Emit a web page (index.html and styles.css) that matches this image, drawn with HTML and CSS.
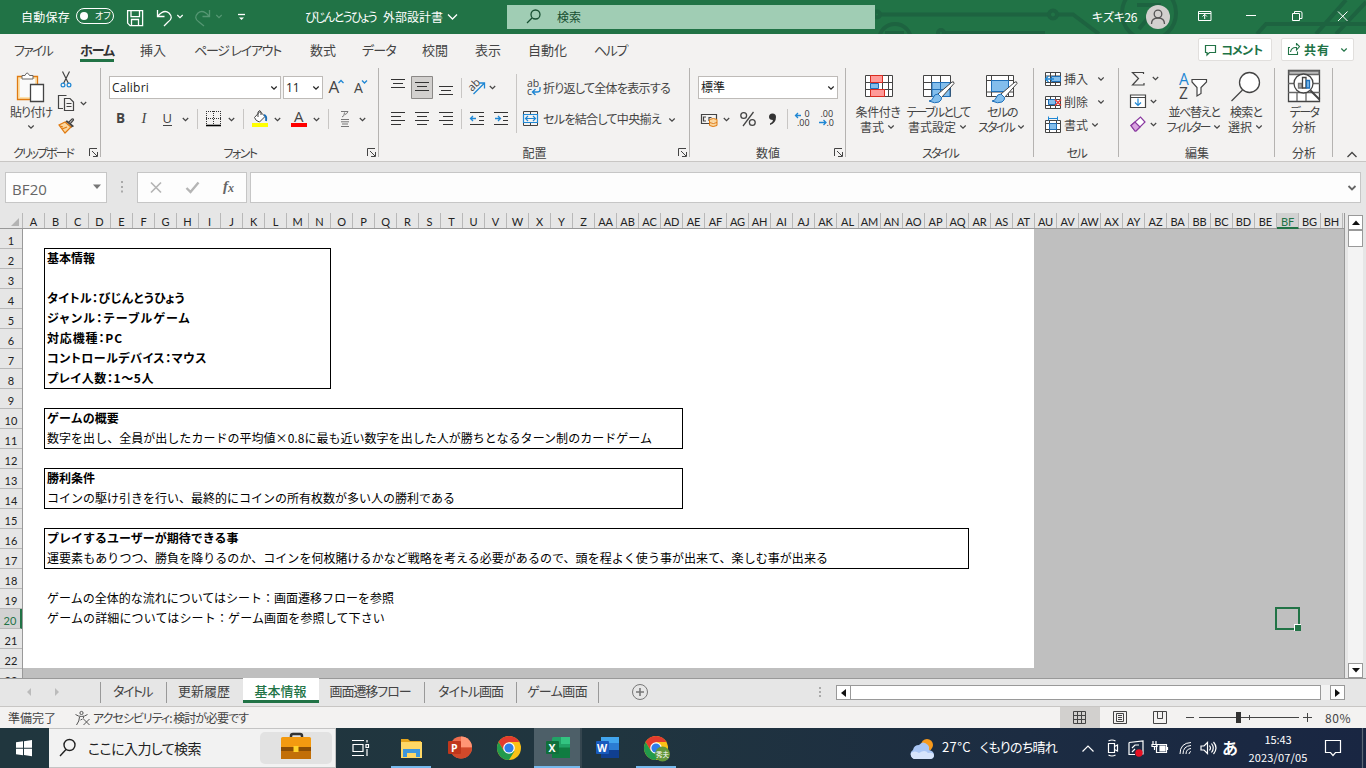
FILE: index.html
```html
<!DOCTYPE html>
<html lang="ja">
<head>
<meta charset="utf-8">
<title>びじんとうひょう 外部設計書</title>
<link rel="stylesheet" href="styles.css">
</head>
<body>
<svg class="defs" width="0" height="0">
  <defs>
    <path id="chev" d="M-2.700 -1.500L0 1.200L2.700 -1.500" fill="none" stroke="currentColor" stroke-width="1.200"/>
    <path id="launch" d="M.5 8V.5H8M3 3l5 5M8.500 4v4.500H4" fill="none" stroke="#444" stroke-width="1"/>
    <g id="brush">
      <path d="M31 7L17 19l3.500 3.500L33 8.500q0-2.500-2-1.500z" fill="#fff" stroke="#444"/>
      <path d="M17 19q-4 0-5 4-1 3-4 3 6 3 10 1 3-2 2.500-4.500z" fill="#83beec" stroke="#1e6fb8"/>
    </g>
    <g id="chrome">
      <circle r="12" fill="#fbc116"/>
      <path d="M-10.400 -6A12 12 0 0 1 10.400 -6L0 -6L-5 3z" fill="#e33b2e"/>
      <path d="M-10.400 -6A12 12 0 0 0 0 12L5.500 3L-5 3z" fill="#229a4b"/>
      <circle r="5.800" fill="#fff"/><circle r="4.600" fill="#2f7de9"/>
    </g>
  </defs>
</svg>

<header class="titlebar">
  <svg class="circuit" width="506" height="34" viewBox="860 0 506 34" fill="none" stroke="#1d6340" stroke-width="4">
    <path d="M879 14.500h169M1058 14.500h15l26 19.500M945 33h100"/>
    <circle cx="877" cy="14.500" r="3"/><circle cx="1053" cy="14.500" r="4"/><circle cx="941" cy="33" r="3"/>
    <circle cx="895" cy="40" r="16"/><path d="M885 33h19"/>
    <circle cx="1149" cy="13" r="27"/><path d="M1137 5h24M1139 29l18-22"/>
    <path d="M1257 34l9-10h100M1316 34l30-34M1336 34l30-32"/>
  </svg>
  <span class="autosave" data-fit="49">自動保存</span>
  <span class="toggle"><i></i><b>オフ</b></span>
  <svg width="130" height="34" viewBox="122 0 130 34" fill="none" stroke="#fff" stroke-width="1.300">
    <path d="M127.600 10.600h15v15h-12.500l-2.500-2.500zM131 10.600v6h8.500v-6M131.500 25.500v-6h7v6"/>
    <path d="M157.500 10v6.500h7M158 16q6-7 11-3 5 5-1 9l-4 4"/>
    <use href="#chev" x="180" y="16.500" color="#fff"/>
    <g stroke="#559773"><path d="M209.500 10v6.500h-7M209 16q-6-7-11-3-5 5 1 9l5 4"/></g>
    <use href="#chev" x="219" y="16.500" color="#559773"/>
    <path d="M238 14.500h7"/><path d="M239 17.500h5l-2.500 2.500z" fill="#fff" stroke="none"/>
  </svg>
  <span class="doc"><span data-fit="71">びじんとうひょう</span><span data-fit="60">外部設計書</span></span>
  <svg width="12" height="34" viewBox="447 0 12 34"><path d="M448 14.500l4.500 4.500 4.500-4.500" fill="none" stroke="#fff" stroke-width="1.300"/></svg>
  <div class="search">
    <svg width="20" height="24" viewBox="524 5 20 24" fill="none" stroke="#174f31" stroke-width="1.300"><circle cx="535.500" cy="14.500" r="4.500"/><path d="M532 18l-5 5"/></svg>
    <span>検索</span>
  </div>
  <span class="user" data-fit="45">キズキ26</span>
  <svg width="226" height="34" viewBox="1140 0 226 34" fill="none" stroke="#fff" stroke-width="1">
    <circle cx="1158" cy="17" r="12" fill="#d2d0ce" stroke="none"/>
    <g stroke="#555" stroke-width="1.300"><circle cx="1158" cy="14" r="3.800"/><path d="M1151.500 24q0-6 6.500-6t6.500 6"/></g>
    <path d="M1198.500 11.500h12.500v9h-12.500zM1198.500 13.500h12.500M1204.700 19v-4.500M1202.500 16.500l2.200-2.200 2.200 2.200"/>
    <path d="M1246 15.500h10M1292.500 13.500h7v7h-7zM1294.500 13.500v-2h6q1.500 0 1.500 1.500v5.500h-2.500M1338 11.500l9.500 9.500M1347.500 11.500l-9.500 9.500"/>
  </svg>
</header>

<nav class="tabs">
  <div class="tab-list">
    <span data-fit="38">ファイル</span><span class="active" data-fit="34">ホーム</span><span>挿入</span><span data-fit="87">ページ レイアウト</span><span>数式</span><span data-fit="34">データ</span><span>校閲</span><span>表示</span><span>自動化</span><span data-fit="33">ヘルプ</span>
  </div>
  <div class="tab-actions">
    <button class="btn comment"><svg width="14" height="14" fill="none" stroke="#217346" stroke-width="1.200"><path d="M1.500 2.500h10v7h-6l-2.500 2.500v-2.500h-1.500z"/></svg><span data-fit="41">コメント</span></button>
    <button class="btn share"><svg width="14" height="14" fill="none" stroke="#217346" stroke-width="1.100"><path d="M3 4.500h-1.500v7h9v-3M3.500 9q1-5 6-4.500v2.500l3-3.500-3-3v2"/></svg><span data-fit="26">共有</span><svg width="14" height="14" viewBox="-7 -7 14 14" color="#217346"><use href="#chev"/></svg></button>
  </div>
</nav>

<section class="ribbon">
  <div class="group g-clip">
    <div class="body">
      <div class="big w-paste">
        <svg width="32" height="38" viewBox="18 66 32 38" fill="none">
          <path d="M20.500 76.500h20v23h-20z" fill="#fde3b0" stroke="#e07a10" stroke-width="1.300"/><path d="M23 79h15v18h-15z" fill="#fafafa"/>
          <path d="M25 78.500v-3h3q2-5 4.500 0h3.500v3.500h-11z" fill="#fff" stroke="#666"/>
          <path d="M33.500 84.500h13v17h-13z" fill="#fff" stroke="#444" stroke-width="1.300"/>
        </svg>
        <span data-fit="42">貼り付け</span>
        <svg width="12" height="8" viewBox="-6 -4 12 8"><use href="#chev"/></svg>
      </div>
      <svg width="32" height="72" viewBox="57 66 32 72" fill="none" stroke="#444" stroke-width="1.200">
        <path d="M62.500 71.500l6 12M69.500 71.500l-6 12"/><g stroke="#1f87d4"><circle cx="63" cy="85" r="1.900"/><circle cx="69" cy="85" r="1.900"/></g>
        <path d="M63 108.500h-4.500v-13h8M64.500 98.500h5.500l3.500 3.500v8.500h-9zM66.500 103.500h5M66.500 106.500h5"/>
        <use href="#chev" x="83.500" y="103.500"/>
        <path d="M66 121l6 5M68 123l4-4q1.500-.5 1.500 1l-3.500 4M73 126l-6-5-2 2 6 4z"/><path d="M65 122l-6 3 6 8 6-6z" fill="#fbd7a0" stroke="#e07a10"/><path d="M60 126l3 1M62 129l5-2" stroke="#e07a10"/>
      </svg>
    </div>
    <div class="label"><span class="cap" data-fit="60">クリップボード</span><svg width="10" height="10"><use href="#launch"/></svg></div>
  </div>

  <div class="group g-font">
    <div class="stack">
      <div class="row r1">
        <div class="combo c-name"><span data-fit="37">Calibri</span><svg width="10" height="10" viewBox="-5 -5 10 10"><use href="#chev"/></svg></div>
        <div class="combo c-size"><span>11</span><svg width="10" height="10" viewBox="-5 -5 10 10"><use href="#chev"/></svg></div>
        <svg class="latin" width="50" height="26" viewBox="323 74 50 26"><text x="328.500" y="92" font-size="17" fill="#444">A</text><text x="354" y="92" font-size="14" fill="#444">A</text><path d="M338.500 82l2.500-2.500 2.500 2.500M362 79.500l2.500 2.500 2.500-2.500" fill="none" stroke="#1f87d4" stroke-width="1.300"/></svg>
      </div>
      <div class="row r2">
        <svg class="latin" width="88" height="24" viewBox="109 107 88 24" fill="#444"><text x="116" y="123" font-size="13.500" font-weight="700">B</text><text class="serif" x="141.500" y="123" font-size="14.500">I</text><text x="162.500" y="122.500" font-size="13">U</text><path d="M163 125.500h9" stroke="#444"/><use href="#chev" x="185.500" y="119.500"/></svg>
        <i class="sep"></i>
        <svg width="45" height="24" viewBox="198 107 45 24"><path d="M206 111.500h15M206 118.500h15M206.500 111v14M213.500 111v14M220.500 111v14" fill="none" stroke="#333" stroke-dasharray="1 1"/><path d="M206 125.500h15" stroke="#000" stroke-width="1.600"/><use href="#chev" x="231.500" y="119.500"/></svg>
        <i class="sep"></i>
        <svg class="latin" width="84" height="24" viewBox="244 107 84 24"><path d="M260 111.500l5 5-5.500 5.500q-4-1-5-4.500zM258 117v-5q2-3 3 0v3" fill="#fff" stroke="#444"/><path d="M264 115q3 1 2 6" fill="none" stroke="#1c6fb8" stroke-width="2"/><path d="M252 123h16v4h-16z" fill="#ff0"/><use href="#chev" x="277.500" y="119.500"/><text x="294" y="121.500" font-size="15" fill="#444">A</text><path d="M291 123h16v4h-16z" fill="red"/><use href="#chev" x="316.500" y="119.500"/></svg>
        <i class="sep"></i>
        <svg width="42" height="24" viewBox="329 107 42 24" stroke="#777"><path d="M341 111.500h7q-1 2.500-3 3M344.500 112.500q0 4-2.500 4.500M341 119.500h8M341 121.800h8M342 124h6M341 126.500h8" fill="none"/><use href="#chev" x="362.500" y="119.500"/></svg>
      </div>
    </div>
    <div class="label"><span class="cap" data-fit="33">フォント</span><svg width="10" height="10"><use href="#launch"/></svg></div>
  </div>

  <div class="group g-align">
    <div class="body">
      <div class="stack">
        <div class="row r1">
          <svg width="81" height="24" viewBox="380 76 81 24" fill="none" stroke="#333"><path d="M391 79.500h14M393 83.500h10M391 87.500h14"/><path d="M411.500 76.500h21v22h-21z" fill="#d2d0ce" stroke="#8a8886"/><path d="M415 82.500h14M417 86.500h10M415 90.500h14M439 86.500h14M441 90.500h10M439 94.500h14"/></svg>
          <i class="sep"></i>
          <svg width="50" height="24" viewBox="462 76 50 24" fill="none"><text class="latin" x="469" y="89" font-size="11" fill="#444" transform="rotate(-45 474 87)">ab</text><path d="M473.500 94L484 83.500M479 83h5.500v5.500" stroke="#1f87d4" stroke-width="1.300"/><use href="#chev" x="492.500" y="87.500"/></svg>
        </div>
        <div class="row r2">
          <svg width="81" height="24" viewBox="380 107 81 24" fill="none" stroke="#333"><path d="M391 112.500h14M391 116.500h10M391 120.500h14M391 124.500h10M415 112.500h14M417 116.500h10M415 120.500h14M417 124.500h10M439 112.500h14M443 116.500h10M439 120.500h14M443 124.500h10"/></svg>
          <i class="sep"></i>
          <svg width="50" height="24" viewBox="462 107 50 24" fill="none" stroke="#333"><path d="M470 112.500h14M479 116.500h5M479 120.500h5M470 124.500h14M494 112.500h14M503 116.500h5M503 120.500h5M494 124.500h14"/><path d="M476 118.500h-5.500M473 116l-2.500 2.500 2.500 2.500M495 118.500h5.500M498 116l2.500 2.500-2.500 2.500" stroke="#1f87d4" stroke-width="1.300"/></svg>
        </div>
      </div>
      <div class="wrapcol">
        <div class="row r1"><svg width="21" height="24" viewBox="522 76 21 24"><text class="latin" x="527" y="86.500" font-size="10.500" fill="#444">ab</text><text class="latin" x="527" y="95" font-size="10.500" fill="#444">c</text><path d="M540 87v3q0 2-3 2h-4M535.500 89l-3 3 3 3" fill="none" stroke="#1f87d4" stroke-width="1.400"/></svg><span data-fit="127">折り返して全体を表示する</span></div>
        <div class="row r2"><svg width="21" height="24" viewBox="523 107 21 24" fill="none"><path d="M524.500 111.500h14v14h-14zM531.500 111v3M531.500 123v3" stroke="#444"/><path d="M524.500 114.500h14v8h-14zM527 118.500h9.500M529 116l-2.500 2.500 2.500 2.500M534 116l2.500 2.500-2.500 2.500" stroke="#1f87d4" stroke-width="1.200"/></svg><span data-fit="118">セルを結合して中央揃え</span><svg width="20" height="12" viewBox="-10 -6 20 12"><use href="#chev" x="1" y="1"/></svg></div>
      </div>
    </div>
    <div class="label"><span class="cap">配置</span><svg width="10" height="10"><use href="#launch"/></svg></div>
  </div>

  <div class="group g-num">
    <div class="stack">
      <div class="row r1"><div class="combo c-num"><span>標準</span><svg width="10" height="10" viewBox="-5 -5 10 10"><use href="#chev"/></svg></div></div>
      <div class="row r2">
        <svg class="latin" width="89" height="24" viewBox="698 107 89 24" fill="none"><path d="M709 123.500h-7.500v-9h15v5M706 117h-2.500v4h2.500M709 121v-3.500h2.500" stroke="#444" stroke-width="1.200"/><path d="M709.500 119.500q4-2 7.500 0v6q-4 2-7.500 0zM709.500 122.500q4 2 7.500 0" fill="#fbd7a0" stroke="#e07a10"/><use href="#chev" x="726.500" y="119.500"/><g stroke="#444" stroke-width="1.300"><path d="M753.500 112l-10.500 14"/><circle cx="743.700" cy="115.500" r="2.900"/><circle cx="752.300" cy="122.500" r="2.900"/></g><path d="M769 117a3.500 3.500 0 1 1 7 0q0 6-6 8v-1.500q3-1.500 3-3.500-4 0-4-3z" fill="#333"/></svg>
        <i class="sep"></i>
        <svg class="latin" width="50" height="24" viewBox="788 107 50 24" font-size="9"><g fill="#333"><text x="804.500" y="117">0</text><text x="797" y="126">.00</text><text x="820.500" y="117">.00</text><text x="826.500" y="126">.0</text></g><path d="M801 115.500h-5.500M798 113l-2.500 2.500 2.500 2.500M819 122.500h7M823.500 120l2.500 2.500-2.500 2.500" fill="none" stroke="#1f87d4" stroke-width="1.300"/></svg>
      </div>
    </div>
    <div class="label"><span class="cap">数値</span><svg width="10" height="10"><use href="#launch"/></svg></div>
  </div>

  <div class="group g-style">
    <div class="body">
      <div class="big w-cond"><svg width="32" height="38" viewBox="863 66 32 38" fill="#fff" stroke="#444"><path d="M865.500 75.500h27v21h-27zM865.500 82.500h27M865.500 89.500h27M871 75v22M882.500 75v22M888.500 75v22"/><path d="M870.500 75.500h12v7h-12zM870.500 89.500h14v7h-14z" fill="#ff9a98" stroke="#d92b20"/><path d="M870.500 83.500h8v5h-8z" fill="#83beec" stroke="#1e6fb8"/></svg><span data-fit="45">条件付き</span><span class="two"><b data-fit="24">書式</b><svg width="12" height="10" viewBox="-7 -5 12 10"><use href="#chev"/></svg></span></div>
      <div class="big w-table"><svg width="34" height="38" viewBox="1 -9 34 38" fill="#fff" stroke="#444"><path d="M3.500.500h27v21h-27zM3.500 7.500h27M3.500 14.500h27M11.500 0v22M20.500 0v22"/><path d="M12 7.500h18v14H12zM12 14.500h18M20.500 7.500v14" fill="#83beec" stroke="#1e6fb8"/><use href="#brush" x="1"/></svg><span data-fit="63">テーブルとして</span><span class="two"><b data-fit="48">書式設定</b><svg width="12" height="10" viewBox="-7 -5 12 10"><use href="#chev"/></svg></span></div>
      <div class="big w-cell"><svg width="34" height="38" viewBox="5 -9 34 38" fill="#fff" stroke="#444"><path d="M3.500.500h27v21h-27zM3.500 5.500h27M3.500 17h27M8.500 0v22M25.500 0v22" transform="translate(3 0)"/><path d="M11.500 5.500h17v11h-17z" fill="#83beec" stroke="#1e6fb8"/><use href="#brush" x="4"/></svg><span data-fit="30">セルの</span><span class="two"><b data-fit="36">スタイル</b><svg width="12" height="10" viewBox="-7 -5 12 10"><use href="#chev"/></svg></span></div>
    </div>
    <div class="label"><span class="cap" data-fit="36">スタイル</span></div>
  </div>

  <div class="group g-cells">
    <div class="list">
      <div class="item"><svg width="20" height="22" viewBox="1044 67 20 22" fill="#fff" stroke="#444"><path d="M1045.500 71.500h15v13h-15zM1045.500 75h15M1045.500 81.500h15M1050.500 71v14M1055.500 71v14"/><path d="M1051.500 75.500h9v5h-9z" fill="#83beec" stroke="#1e6fb8"/><path d="M1054 78h-8.500M1048.500 75l-3 3 3 3" fill="none" stroke="#1f87d4" stroke-width="1.300"/></svg><span>挿入</span><svg width="16" height="10" viewBox="-14 -5 16 10"><use href="#chev" x="-1"/></svg></div>
      <div class="item"><svg width="20" height="22" viewBox="1044 90 20 22" fill="#fff" stroke="#444"><path d="M1045.500 95.500h15v12h-15zM1045.500 98.500h15M1045.500 104.500h15M1050.500 95v13M1055.500 95v13"/><path d="M1048.500 98.500h7v5h-7z" fill="#83beec" stroke="#1e6fb8"/><path d="M1055 98.500l6 6M1061 98.500l-6 6" stroke="#e8403a" stroke-width="1.500"/></svg><span>削除</span><svg width="16" height="10" viewBox="-14 -5 16 10"><use href="#chev" x="-1"/></svg></div>
      <div class="item"><svg width="20" height="22" viewBox="1044 113 20 22" fill="#fff" stroke="#444"><path d="M1045.500 119.500h15v12h-15zM1045.500 122.500h15M1045.500 128.500h15M1049.500 119v13M1056.500 119v13"/><path d="M1049.500 122.500h7v6h-7z" fill="#83beec" stroke="#1e6fb8"/><path d="M1048 117.500h10M1048.500 115.500v4M1057.500 115.500v4" stroke="#1f87d4"/></svg><span>書式</span><svg width="11" height="10" viewBox="-10 -5 11 10"><use href="#chev" x="-3"/></svg></div>
    </div>
    <div class="label"><span class="cap" data-fit="20">セル</span></div>
  </div>

  <div class="group g-edit">
    <div class="body">
      <svg width="44" height="72" viewBox="1119 66 44 72" fill="none" stroke="#444" stroke-width="1.200">
        <path d="M1143.500 74v-1.500h-11l6 6-6 6.500h11.500v-2"/><use href="#chev" x="1155.500" y="78.500"/>
        <path d="M1130.500 95h15v12.500h-15zM1130.500 97.500h15" fill="#fff"/><path d="M1138 98.500v6.500M1135 102.500l3 3 3-3" stroke="#1f87d4"/><use href="#chev" x="1153.500" y="101.500"/>
        <path d="M1131 125.500l9.500-8.500 4.500 5-9 9h-1z" fill="#fff" stroke="#8a3aa0"/><path d="M1131 125.500l4-3.500 5 5-4 4h-1z" fill="#d9a3e0" stroke="#8a3aa0"/><use href="#chev" x="1153.500" y="124.500"/>
      </svg>
      <div class="big w-sort"><svg class="latin" width="34" height="38" viewBox="1179 66 34 38"><text x="1181" y="85" font-size="15.500" fill="#1f87d4">A</text><text x="1181" y="99" font-size="15.500" fill="#444">Z</text><path d="M1194 79.500h14.500v2.500l-5.500 5.500v6l-4 2.500v-8.500l-5-5.500z" fill="#fff" stroke="#444" stroke-width="1.200"/></svg><span data-fit="51">並べ替えと</span><span class="two"><b data-fit="43">フィルター</b><svg width="12" height="10" viewBox="-7 -5 12 10"><use href="#chev"/></svg></span></div>
      <div class="big w-find"><svg width="34" height="38" viewBox="1229 66 34 38" fill="#fff" stroke="#444" stroke-width="1.300"><circle cx="1249.500" cy="82.500" r="10"/><path d="M1242.500 90l-11 11"/></svg><span data-fit="32">検索と</span><span class="two"><b data-fit="24">選択</b><svg width="12" height="10" viewBox="-7 -5 12 10"><use href="#chev"/></svg></span></div>
    </div>
    <div class="label"><span class="cap">編集</span></div>
  </div>

  <div class="group g-data">
    <div class="body">
      <div class="big w-data"><svg width="34" height="38" viewBox="1287 66 34 38" fill="#fff" stroke="#444" stroke-width="1.300"><path d="M1288.500 70.500h31v31h-31z"/><path d="M1289 71h30v3.500h-30z" fill="#bbb" stroke="#666"/><path d="M1288 83.500h32M1288 92.500h32M1297 92v9M1306 92v9" stroke="#666"/><circle cx="1303.500" cy="83.500" r="9.500"/><path d="M1310.500 90.500l9 9" stroke-width="2"/><path d="M1298.500 83.500h3.500v4.500h-3.500z" fill="#aaa" stroke="#777"/><path d="M1302.500 77.500h3.500v10.500h-3.500z"/><path d="M1306.500 80.500h3v7.500h-3z" fill="#83beec" stroke="#1e6fb8"/></svg><span data-fit="29">データ</span><span>分析</span></div>
    </div>
    <div class="label"><span class="cap">分析</span></div>
  </div>
  <svg class="collapse" width="12" height="8" viewBox="0 0 12 8"><path d="M1.500 6L6 1.500 10.500 6" fill="none" stroke="#444" stroke-width="1.300"/></svg>
</section>

<section class="formula">
  <div class="namebox"><span data-fit="35">BF20</span><svg width="8" height="6"><path d="M0 .500h8L4 5z" fill="#777"/></svg></div>
  <svg width="30" height="30"><path d="M14 9h2v2h-2zM14 14h2v2h-2zM14 18.500h2v2h-2z" fill="#aaa"/></svg>
  <div class="fx"><svg width="108" height="28" viewBox="138 173 108 28" fill="none" stroke="#b5b5b5" stroke-width="1.700"><path d="M151 182.500l10 10M161 182.500l-10 10"/><path d="M186.500 188l4 4 8-9.500" stroke-width="2.400"/><text x="223" y="191" class="fxt">f</text><text x="228" y="192" class="fxt small">x</text></svg></div>
  <div class="finput"><svg width="10" height="8" viewBox="-5 -4 10 8"><path d="M-3.500 -2L0 1.500l3.500-3.500" fill="none" stroke="#666" stroke-width="1.800"/></svg></div>
</section>

<section class="sheet">
  <div class="main">
    <div class="colheads" id="cols"><span class="corner"><svg width="22" height="15"><path d="M19 5v8h-8z" fill="#b3b3b3"/></svg></span></div>
    <div class="gridrow">
      <div class="rowheads" id="rows"></div>
      <div class="canvas">
        <div class="page">
          <div class="box b1 pg">
            <p>基本情報</p><p></p>
            <p class="lo"><span data-fit="138">タイトル：びじんとうひょう</span></p>
            <p class="lo"><span data-fit="144">ジャンル：テーブルゲーム</span></p>
            <p class="lo"><span data-fit="76">対応機種：PC</span></p>
            <p class="lo"><span data-fit="160">コントロールデバイス：マウス</span></p>
            <p class="lo"><span data-fit="107">プレイ人数：1～5人</span></p>
          </div>
          <div class="box b2"><p class="h">ゲームの概要</p><p><span data-fit="605">数字を出し、全員が出したカードの平均値×0.8に最も近い数字を出した人が勝ちとなるターン制のカードゲーム</span></p></div>
          <div class="box b2"><p class="h">勝利条件</p><p><span>コインの駆け引きを行い、最終的にコインの所有枚数が多い人の勝利である</span></p></div>
          <div class="box b3"><p class="h">プレイするユーザーが期待できる事</p><p><span data-fit="781">運要素もありつつ、勝負を降りるのか、コインを何枚賭けるかなど戦略を考える必要があるので、頭を程よく使う事が出来て、楽しむ事が出来る</span></p></div>
          <div class="notes"><p>ゲームの全体的な流れについてはシート：画面遷移フローを参照</p><p><span data-fit="338">ゲームの詳細についてはシート：ゲーム画面を参照して下さい</span></p></div>
        </div>
        <div class="selected-cell"></div>
      </div>
    </div>
  </div>
  <div class="vscroll"><i class="sb"><svg width="8" height="5"><path d="M0 5h8L4 .500z" fill="#111"/></svg></i><i class="thumb"></i><i class="track"></i><i class="sb"><svg width="8" height="5"><path d="M0 0h8L4 4.500z" fill="#111"/></svg></i></div>
</section>

<section class="sheettabs">
  <svg class="nav" width="100" height="28" fill="#bbb"><path d="M31 10v8l-4-4zM55 10v8l4-4z"/></svg>
  <div class="st s1"><span data-fit="39">タイトル</span></div>
  <div class="st s2"><span>更新履歴</span></div>
  <div class="st s3 on"><span>基本情報</span></div>
  <div class="st s4"><span data-fit="81">画面遷移フロー</span></div>
  <div class="st s5"><span data-fit="65">タイトル画面</span></div>
  <div class="st s6"><span data-fit="60">ゲーム画面</span></div>
  <svg width="237" height="28" viewBox="599 678 237 28"><circle cx="640" cy="692" r="7.500" fill="none" stroke="#777"/><path d="M636 692h8M640 688v8" stroke="#777" stroke-width="1.600"/><path d="M819 687h2v2h-2zM819 691h2v2h-2zM819 695h2v2h-2z" fill="#aaa"/></svg>
  <div class="hscroll"><i class="sb"><svg width="5" height="8"><path d="M5 0v8L0 4z" fill="#111"/></svg></i><i class="thumb"></i><i class="track"></i><i class="sb"><svg width="5" height="8"><path d="M0 0v8l5-4z" fill="#111"/></svg></i></div>
</section>

<footer class="status">
  <span class="ready">準備完了</span>
  <svg width="18" height="16" viewBox="1.500 0 18 16" fill="none" stroke="#555"><circle cx="8" cy="3" r="1.600"/><path d="M2 4.500q3 2 6 2t6-2M6 7q0 4-3 8M7 10l2-1M10 9l6 6M16 9l-6 6M10 6.500v2"/></svg>
  <span class="acc" data-fit="155">アクセシビリティ: 検討が必要です</span>
  <div class="views">
    <svg class="on" width="40" height="21" fill="none" stroke="#444"><path d="M13.500 4.500h12v12h-12zM13.500 8.500h12M13.500 12.500h12M17.500 4.500v12M21.500 4.500v12"/></svg>
    <svg width="40" height="21" fill="none" stroke="#444"><path d="M13.500 4.500h13v12h-13zM16.500 6.500h7v8h-7zM18 8.500h4M18 10.500h4M18 12.500h4"/></svg>
    <svg width="40" height="21" fill="none" stroke="#444"><path d="M13.500 4.500h13v12h-13zM17.500 4.500v7h5v-7M22.500 11.500v-7"/></svg>
    <svg width="142" height="21" viewBox="1180 707 142 21" stroke="#444"><path d="M1186 717.500h8M1199 717.500h100M1249.500 715v5M1303 717.500h9M1307.500 713v9"/><path d="M1236 712h5v11h-5z" fill="#333" stroke="none"/></svg>
    <span class="zoom" data-fit="26">80%</span>
  </div>
</footer>

<footer class="taskbar">
  <svg width="49" height="40" viewBox="0 728 49 40" fill="#fff"><path d="M16 742.300l7-1v6.500h-7zM24 741.200l8-1.200v7.800h-8zM16 748.800h7v6.500l-7-1zM24 748.800h8v7.500l-8-1.200z"/></svg>
  <div class="tsearch">
    <svg width="39" height="38" fill="none" stroke="#222" stroke-width="1.400"><circle cx="20.500" cy="16" r="5.500"/><path d="M17 20.500l-6 6.500"/></svg>
    <span data-fit="113">ここに入力して検索</span>
    <svg class="case" width="72" height="32"><path d="M31 6V4q0-2 2-2h7q2 0 2 2v2" fill="none" stroke="#333" stroke-width="2.500"/><rect x="21" y="5" width="30" height="22" rx="1.500" fill="#f39a10"/><path d="M21 15h30v4H21z" fill="#8a4d05"/><path d="M21 19h30v8H21z" fill="#c26f08"/><rect x="33.500" y="14" width="5" height="6" fill="#ffd229"/></svg>
  </div>
  <svg width="55" height="40" viewBox="336 728 55 40" fill="none" stroke="#fff" stroke-width="1.200"><path d="M352 740.500h12M352 755.500h12M353 744.500h10v7h-10zM367 740v2.500M367 749v7"/><path d="M366 744.500h2.500v3h-2.500z"/></svg>
  <div class="app run"><svg width="40" height="40"><path d="M10 11h7l2 2h11v17H10z" fill="#e6a51c"/><path d="M10 14h21v16H10z" fill="#ffd866"/><path d="M12 29v-8h17v8h-4v-4h-9v4z" fill="#3f97dc"/></svg></div>
  <div class="app"><svg width="56" height="40" viewBox="1 0 56 40"><circle cx="31" cy="19.500" r="11" fill="#ee6c4d"/><path d="M31 8.500a11 11 0 0 1 11 11H31z" fill="#ff9575"/><path d="M20 19.500h22a11 11 0 0 1-22 0z" fill="#d2492a"/><rect x="18" y="13" width="13" height="13" rx="1" fill="#c0371c"/><text class="logo" x="21" y="23.500">P</text></svg></div>
  <div class="app"><svg width="47" height="40"><use href="#chrome" x="22" y="20"/></svg></div>
  <div class="app run focus"><svg width="45" height="40"><rect x="18" y="9" width="18" height="21" rx="1.500" fill="#21a366"/><path d="M27 9h9v7h-9z" fill="#33c481"/><path d="M18 19.500h18v10.500H18z" fill="#107c41"/><rect x="12" y="13" width="13" height="13" rx="1" fill="#0f703b"/><text class="logo" x="14.500" y="23.500">X</text></svg></div>
  <div class="app"><svg width="54" height="40" viewBox="3 0 54 40"><rect x="22" y="9" width="18" height="21" rx="1.500" fill="#2b7cd3"/><path d="M22 9h18v6H22z" fill="#41a5ee"/><path d="M22 22h18v8H22z" fill="#103f91"/><rect x="17" y="13" width="13" height="13" rx="1" fill="#185abd"/><text class="logo" x="18" y="23.500">W</text></svg></div>
  <div class="app run"><svg width="40" height="40"><use href="#chrome" x="20" y="20"/><circle cx="26.500" cy="26" r="7.500" fill="#64973a"/><text class="badge" x="20" y="29">秀夫</text></svg></div>
  <div class="tray">
    <svg width="32" height="40" viewBox="908 728 32 40"><circle cx="928" cy="745" r="6" fill="#f79a1c"/><path d="M915 759a5 5 0 0 1-1-9q1-5 6-5 4-5 9 0 2 2 1 5 5 1 5 5 0 4-4 4z" fill="#a9c6f5"/><path d="M915 759q-4-2-3-6 4-3 8 0 6-4 9 0 6-1 6 3-1 3-4 3z" fill="#d6e4fb"/></svg>
    <span class="temp" data-fit="29">27°C</span><span class="wx" data-fit="77">くもりのち晴れ</span>
    <svg width="146" height="40" viewBox="1076 728 146 40" fill="none" stroke="#fff" stroke-width="1.200"><path d="M1083.500 751.500l5.500-5.500 5.500 5.500"/><path d="M1109.500 743.500h6v9h-6zM1115.500 746.500l3-1.500v6l-3-1.500M1109.500 741q3.500-2 7 0M1109.500 755q3.500 2 7 0"/><path d="M1130 742.500l14-1.500v13h-6M1130 742.500v12h6M1133 748l3-3h4M1133 752l3-3"/><circle cx="1140" cy="753" r="3.700" fill="#e81123" stroke="none"/><path d="M1157.500 744.500h10v8h-10zM1168.500 747v3M1154 741v3M1157 741v3M1153 744.500h5v2h-5zM1155.500 747v3"/><path d="M1161 746h5v5h-5z" fill="#fff"/><g stroke-width="1"><path d="M1181 754q0-11 11-11.500M1184 754q0-8 8-8.500M1187 754q0-5 5-5.500M1190 754q0-2 2-2.500"/></g><path d="M1202 746h3l3.500-3.500v11l-3.500-3.500h-3zM1210.500 745.500q2 2.500 0 5M1212.500 743.500q3.500 4.500 0 9M1214.500 742q5 6 0 12"/></svg>
    <span class="ime">あ</span>
    <div class="clock"><span data-fit="27">15:43</span><span data-fit="59">2023/07/05</span></div>
    <svg width="57" height="40" viewBox="1309 728 57 40" fill="none" stroke="#fff" stroke-width="1.200"><path d="M1325.500 740.500h15v12h-5l-2.500 3-2.500-3h-5z"/><path d="M1362.500 728v40" stroke="#5b6775"/></svg>
  </div>
</footer>
<script src="app.js"></script>
</body>
</html>
```
FILE: styles.css
```css
* { box-sizing: border-box; }
body { margin: 0; width: 1366px; height: 768px; overflow: hidden; display: flex; flex-direction: column; background: #e6e6e6; color: #444; font: 12px/16px "Noto Sans CJK JP", sans-serif; font-feature-settings: "palt"; }
svg { display: block; flex: none; }
p { margin: 0; }
i { font-style: normal; display: block; }
.defs { position: absolute; }
[data-fit] { display: inline-block; white-space: nowrap; }
.latin text, text.latin { font-family: "Open Sans", sans-serif; stroke: none; }
.latin text.serif { font-family: "Liberation Serif", serif; font-style: italic; }

/* Title bar */
.titlebar { position: relative; flex: none; height: 34px; background: #217346; color: #fff; display: flex; align-items: center; }
.titlebar > * { position: relative; flex: none; }
.titlebar .circuit { position: absolute; right: 0; top: 0; }
.autosave { margin-left: 21px; width: 55px; }
.toggle { width: 38px; height: 16px; border: 1.3px solid #fff; border-radius: 8px; display: flex; align-items: center; margin: -2px 8px 0 0; font-size: 9px; }
.toggle i { width: 8px; height: 8px; border-radius: 4px; background: #fff; margin-left: 3px; }
.toggle b { font-weight: 400; margin-left: 7px; }
.doc { display: flex; width: 142px; margin-left: 53px; gap: 7px; }
.search { width: 368px; height: 24px; margin-left: 48px; background: #a0cdb4; color: #174f31; display: flex; align-items: center; padding-left: 17px; gap: 13px; }
.user { margin-left: 217px; width: 48px; }

/* Ribbon tabs */
.tabs { flex: none; height: 30px; background: #f3f2f1; display: flex; justify-content: space-between; font-size: 13px; }
.tab-list { display: grid; grid-template-columns: 66px 60px 54px 116px 52px 60px 53px 53px 66px 60px; padding-left: 14px; line-height: 31px; }
.tab-list span { justify-self: start; height: 30px; white-space: nowrap; }
.tab-list .active { font-weight: 700; color: #333; background: linear-gradient(#217346, #217346) 0 25px / 100% 3px no-repeat; }
.tab-actions { display: flex; gap: 9px; padding: 4px 12px 0 0; }
.btn { height: 23px; border: 1px solid #e1dfdd; border-radius: 2px; background: #fff; color: #217346; font: 700 12px/20px "Noto Sans CJK JP", sans-serif; display: flex; align-items: center; padding: 0 0 0 5px; gap: 3px; }
.comment { width: 74px; }
.share { width: 73px; }
.share svg:last-child { margin-left: 4px; }

/* Ribbon */
.ribbon { flex: none; height: 98px; background: #f3f2f1; border-bottom: 1px solid #c8c6c4; display: flex; position: relative; }
.group { height: 97px; display: flex; flex-direction: column; background: linear-gradient(#b5b3b1, #b5b3b1) right 4px / 1px 89px no-repeat; }
.group.g-clip { width: 101px; }
.g-font { width: 278px; }
.g-align { width: 311px; }
.g-num { width: 156px; }
.g-style { width: 188px; }
.g-cells { width: 85px; }
.g-edit { width: 156px; }
.g-data { width: 58px; }
.body { display: flex; flex: none; height: 80px; padding-top: 2px; }
.label { flex: none; height: 17px; display: grid; grid-template-columns: 1fr auto 1fr; align-items: center; line-height: 15px; }
.label .cap { grid-column: 2; margin-top: -1px; }
.label svg { justify-self: end; margin-right: 2px; margin-top: 1px; }
.g-clip .label { grid-template-columns: 13px auto 1fr; }
.big { display: flex; flex-direction: column; align-items: center; flex: none; }
.big > span { height: 15px; line-height: 16px; white-space: nowrap; }
.two { display: flex; align-items: center; margin-left: 0; }
.two b { font-weight: 400; }
.w-paste { width: 57px; padding-left: 5px; }
.w-paste > span + svg { margin-top: 4px; }
.w-cond { width: 54px; margin-left: 5px; }
.w-cond > svg { margin-left: 2px; }
.w-table { width: 66px; }
.w-cell { width: 58px; margin-left: 2px; }
.w-sort { width: 62px; }
.w-find { width: 38px; margin-left: 2px; }
.w-data { width: 58px; }
.stack { height: 80px; padding: 12px 0 0 8px; flex: none; }
.row { display: flex; align-items: center; white-space: nowrap; }
.r1 { height: 23px; }
.r2 { height: 24px; margin-top: 8px; }
.sep { width: 1px; height: 20px; background: #c8c6c4; flex: none; }
.combo { height: 23px; border: 1px solid #bebbb8; background: #fff; color: #222; display: flex; align-items: center; justify-content: space-between; padding: 0 1px 0 2px; font-family: "Open Sans", "Noto Sans CJK JP", sans-serif; flex: none; }
.c-name { width: 172px; }
.c-size { width: 40px; margin-left: 2px; }
.c-num { width: 140px; }
.g-align .body { padding: 0; }
.g-align .stack { padding-left: 1px; width: 137px; }
.wrapcol { margin: 10px 0 0; padding-left: 5px; height: 59px; border-left: 1px solid #c8c6c4; padding-top: 2px; }
.list { height: 80px; padding: 3px 0 0 10px; }
.item { height: 23px; display: flex; align-items: center; }
.item span { width: 24px; }
.collapse { margin: 87px 0 0 13px; }

/* Formula bar */
.formula { flex: none; height: 51px; padding: 10px 5px 0; display: flex; }
.namebox { width: 102px; height: 31px; border: 1px solid #c6c6c6; background: #fdfdfd; display: flex; align-items: center; justify-content: space-between; padding: 2px 5px 0 6px; font: 15px "Open Sans", sans-serif; color: #666; }
.namebox svg { margin-top: -4px; }
.fx { width: 110px; height: 31px; border: 1px solid #c6c6c6; background: #fdfdfd; }
.fxt { font: italic 700 15px "Liberation Serif", serif; fill: #666; stroke: none; }
.fxt.small { font-size: 12px; }
.finput { flex: 1; height: 31px; margin-left: 3px; border: 1px solid #c6c6c6; background: #fdfdfd; display: flex; align-items: center; justify-content: flex-end; padding-right: 3px; }

/* Worksheet */
.sheet { flex: none; height: 465px; display: flex; }
.main { width: 1345px; border-right: 1px solid #999; }
.colheads { display: flex; height: 16px; border-bottom: 1px solid #999; font: 11px/17px Lato, sans-serif; color: #222; }
.colheads span { width: 22px; text-align: center; border-right: 1px solid #b8b8b8; flex: none; white-space: nowrap; letter-spacing: -.1px; }
.colheads .corner { width: 23px; }
.colheads .sel { background: #d2d2d2; color: #217346; height: 16px; border-bottom: 2px solid #217346; }
.gridrow { display: flex; height: 449px; }
.rowheads { width: 23px; border-right: 1px solid #999; overflow: hidden; font: 11px/24px Lato, sans-serif; color: #222; }
.rowheads span { display: block; height: 20px; text-align: center; border-bottom: 1px solid #b8b8b8; overflow: hidden; }
.rowheads .sel { background: #d2d2d2; color: #217346; border-right: 2px solid #217346; }
.canvas { position: relative; flex: 1; background: #bfbfbf; overflow: hidden; }
.page { width: 1011px; height: 439px; background: #fff; padding: 19px 0 0 21px; color: #000; font-feature-settings: normal; }
.box { border: 1px solid #000; padding: 0 0 0 2px; margin-bottom: 19px; height: 41px; }
.box p { height: 20px; line-height: 17px; white-space: nowrap; }
.b1 { width: 287px; height: 141px; font-weight: 700; font-feature-settings: "palt"; }
.b1 p { line-height: 18px; }
.b2 { width: 639px; }
.b3 { width: 925px; }
.box .h { font-weight: 700; }
.notes { padding: 1px 0 0 3px; }
.notes p { height: 20px; line-height: 18px; white-space: nowrap; }
.selected-cell { position: absolute; left: 1252px; top: 378px; width: 25px; height: 23px; border: 2px solid #217346; }
.selected-cell::after { content: ""; position: absolute; right: -3px; bottom: -3px; width: 6px; height: 6px; background: #217346; border: 1px solid #fff; border-width: 1px 0 0 1px; }
.vscroll { width: 14px; margin: 2px 0 0 3px; display: flex; flex-direction: column; }
.sb { width: 15px; height: 15px; border: 1px solid #999; background: #fff; display: flex; align-items: center; justify-content: center; flex: none; }
.vscroll .thumb { width: 15px; height: 17px; border: 1px solid #999; background: #fff; }
.vscroll .track { flex: 1; width: 15px; background: #f3f3f3; }

/* Sheet tabs */
.sheettabs { flex: none; height: 28px; border-top: 1px solid #999; display: flex; font-size: 13px; }
.sheettabs > svg { margin-top: -1px; }
.st { border-right: 1px solid #999; height: 21px; margin-top: 3px; line-height: 18px; display: flex; justify-content: center; white-space: nowrap; }
.s1 { width: 67px; border-left: 1px solid #999; padding-right: 2px; }
.s2 { width: 76px; border-right: 0; padding-right: 2px; }
.s3.on { width: 76px; height: 25px; margin-top: -1px; padding: 4px 1px 0 0; background: #fff; color: #217346; font-weight: 500; border: 0; border-bottom: 3px solid #217346; }
.s4 { width: 106px; padding-right: 3px; }
.s5 { width: 92px; }
.s6 { width: 82px; padding-right: 1px; }
.hscroll { display: flex; padding-top: 6px; }
.hscroll .thumb { width: 471px; height: 15px; border: 1px solid #999; margin-left: -1px; background: #fff; }
.hscroll .track { width: 9px; height: 15px; background: #f3f3f3; }

/* Status bar */
.status { flex: none; height: 22px; border-top: 1px solid #c8c6c4; background: #f3f2f1; display: flex; align-items: center; line-height: 15px; }
.ready { margin-left: 8px; width: 67px; }
.views { margin-left: auto; display: flex; align-items: center; padding-right: 11px; }
.views .on { background: #d2d0ce; }
.zoom { width: 30px; margin-left: 3px; }

/* Taskbar */
.taskbar { flex: none; height: 40px; background: linear-gradient(90deg, #20363e, #20353f 45%, #1c2c42 75%, #192642); color: #fff; display: flex; }
.tsearch { width: 287px; background: #f2f2f2; border: 1px solid #c4c4c4; border-left: 0; color: #222; font-size: 14px; line-height: 38px; display: flex; }
.case { margin: 3px 3px 0 auto; background: #e2e2e2; border-radius: 5px; }
.app.run { box-shadow: inset 0 -2px #76b9ed; }
.app.focus { width: 48px; background: #4d5f68; border-right: 2px solid #35464f; }
.logo { font: 700 10.5px "Open Sans", sans-serif; fill: #fff; }
.badge { font: 6.5px "Noto Sans CJK JP", sans-serif; fill: #fff; }
.tray { margin-left: auto; display: flex; font-size: 13px; line-height: 38px; white-space: nowrap; }
.temp { margin-left: 3px; width: 38px; }
.wx { width: 95px; }
.ime { width: 18px; margin-left: 1px; font-size: 16px; font-weight: 700; }
.clock { width: 69px; font: 11px/18px "Noto Sans CJK JP", sans-serif; display: flex; flex-direction: column; align-items: center; padding: 2px 0 0 7px; }
```
FILE: app.js
```js
// Column and row headings
const cols = document.getElementById('cols');
const rows = document.getElementById('rows');
for (let i = 0; i < 60; i++) {
  const s = document.createElement('span');
  s.textContent = (i < 26 ? '' : String.fromCharCode(64 + Math.floor(i / 26))) + String.fromCharCode(65 + i % 26);
  if (s.textContent === 'BF') s.className = 'sel';
  cols.appendChild(s);
}
for (let n = 1; n <= 23; n++) {
  const s = document.createElement('span');
  s.textContent = n;
  if (n === 20) s.className = 'sel';
  rows.appendChild(s);
}

// Track each label so that it fills its set width
document.querySelectorAll('[data-fit]').forEach(el => {
  const range = document.createRange();
  range.selectNodeContents(el);
  const natural = range.getBoundingClientRect().width;
  el.style.letterSpacing = (el.dataset.fit - natural) / el.textContent.length + 'px';
});
```
